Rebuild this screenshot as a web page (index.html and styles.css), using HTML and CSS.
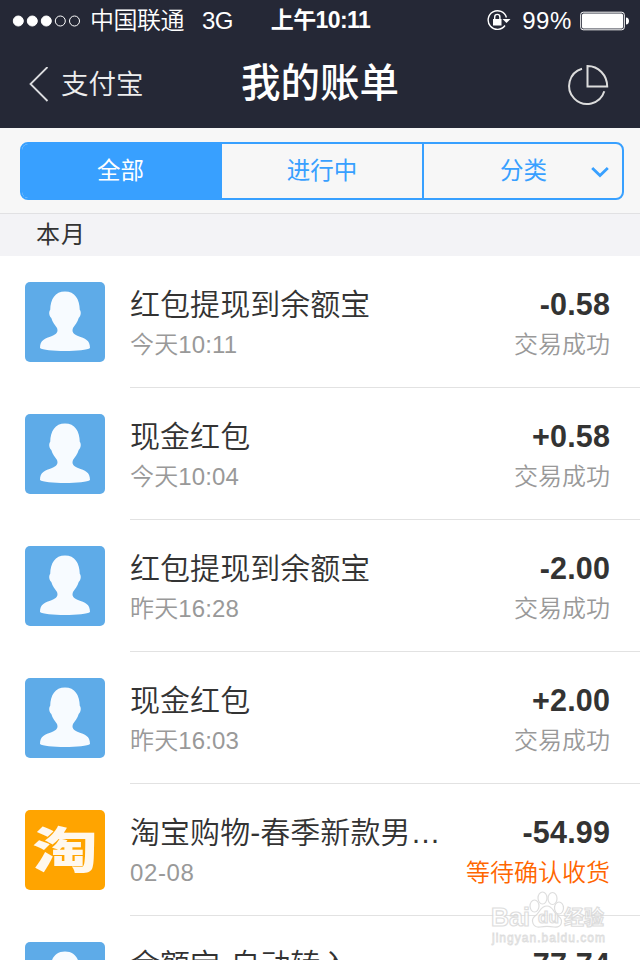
FILE: index.html
```html
<!DOCTYPE html>
<html lang="zh-CN">
<head>
    <meta charset="UTF-8">
    <meta name="viewport" content="width=device-width, initial-scale=1">
    <title>我的账单</title>
    <link rel="stylesheet" href="styles.css">
</head>
<body>
    <svg class="sprite" width="0" height="0">
        <symbol id="person" viewBox="0 0 80 80">
            <path d="M40 9.500C30 9.500 25.500 17 25.200 28C23.800 29 23.800 34 26.300 36C27.500 40.500 30 43 32 46C33.500 50 31.500 52 27 54C20 56.500 15 58 15 66C19 70 61 70 65 66C65 58 60 56.500 53 54C48.500 52 46.500 50 48 46C50 43 52.500 40.500 53.700 36C56.200 34 56.200 29 54.800 28C54.500 17 50 9.500 40 9.500Z" fill="#f7fbff"/>
        </symbol>
    </svg>

    <header class="header">
        <div class="status-bar">
            <div class="status-left">
                <svg class="signal" width="69" height="12" viewBox="0 0 69 12" fill="#fff" stroke="#fff">
                    <circle cx="6.300" cy="6" r="5"/>
                    <circle cx="20.300" cy="6" r="5"/>
                    <circle cx="34.300" cy="6" r="5"/>
                    <circle cx="48.300" cy="6" r="5" fill="none"/>
                    <circle cx="62.500" cy="6" r="5" fill="none"/>
                </svg>
                <span class="carrier">中国联通</span>
                <span class="network">3G</span>
            </div>
            <span class="clock">上午10:11</span>
            <div class="status-right">
                <svg class="lock" width="24" height="22" viewBox="0 0 24 22" fill="none" stroke="#fff" stroke-width="1.4">
                    <path d="M19.400 7.500A9.300 9.300 0 1 0 18 15.500"/>
                    <path d="M15.500 9h8l-4 4z" fill="#fff" stroke="none"/>
                    <rect x="6" y="9" width="8.500" height="6.500" fill="#fff" stroke="none"/>
                    <path d="M7.700 9.500V7a2.600 2.600 0 0 1 5.200 0V9.500"/>
                </svg>
                <span class="percent">99%</span>
                <svg class="battery" width="49" height="20" viewBox="0 0 49 20">
                    <rect x=".7" y="1.200" width="43.600" height="17.600" rx="2.500" fill="none" stroke="#fff"/>
                    <rect x="2" y="2.500" width="41" height="15" rx="1.500" fill="#fff"/>
                    <path d="M46 6.500c4 0 4 7 0 7z" fill="#fff"/>
                </svg>
            </div>
        </div>
        <nav class="nav-bar">
            <a class="back">
                <svg width="20" height="36" viewBox="0 0 20 36" fill="none" stroke="#dcdde0" stroke-width="1.800"><path d="M18.500 0L1.500 17L18.500 34"/></svg>
                <span>支付宝</span>
            </a>
            <h1>我的账单</h1>
            <a class="chart">
                <svg width="40" height="40" viewBox="0 0 40 40" fill="none" stroke="#dcdcdc" stroke-width="2">
                    <path d="M13 3.700A18 18 0 1 0 35.300 26.300"/>
                    <path d="M18.500 1V21.500H38.200A19.700 20.500 0 0 0 18.500 1Z"/>
                </svg>
            </a>
        </nav>
    </header>

    <div class="filter">
        <div class="tabs">
            <div class="tab active">全部</div>
            <div class="tab">进行中</div>
            <div class="tab tab-more">
                <span>分类</span>
                <svg width="18" height="12" viewBox="0 0 18 12" fill="none" stroke="#38a0ff" stroke-width="2.800"><path d="M1.200 2L9 9.500L16.800 2"/></svg>
            </div>
        </div>
    </div>

    <h2 class="month">本月</h2>

    <ul class="bills">
        <li class="bill">
            <svg class="avatar"><use href="#person"/></svg>
            <div class="bill-body">
                <div class="line"><span class="title">红包提现到余额宝</span><span class="amount">-0.58</span></div>
                <div class="line sub"><span class="date">今天10:11</span><span>交易成功</span></div>
            </div>
        </li>
        <li class="bill">
            <svg class="avatar"><use href="#person"/></svg>
            <div class="bill-body">
                <div class="line"><span class="title">现金红包</span><span class="amount">+0.58</span></div>
                <div class="line sub"><span class="date">今天10:04</span><span>交易成功</span></div>
            </div>
        </li>
        <li class="bill">
            <svg class="avatar"><use href="#person"/></svg>
            <div class="bill-body">
                <div class="line"><span class="title">红包提现到余额宝</span><span class="amount">-2.00</span></div>
                <div class="line sub"><span class="date">昨天16:28</span><span>交易成功</span></div>
            </div>
        </li>
        <li class="bill">
            <svg class="avatar"><use href="#person"/></svg>
            <div class="bill-body">
                <div class="line"><span class="title">现金红包</span><span class="amount">+2.00</span></div>
                <div class="line sub"><span class="date">昨天16:03</span><span>交易成功</span></div>
            </div>
        </li>
        <li class="bill">
            <div class="avatar taobao"><span>淘</span></div>
            <div class="bill-body">
                <div class="line"><span class="title">淘宝购物-春季新款男…</span><span class="amount">-54.99</span></div>
                <div class="line sub"><span class="date day">02-08</span><span class="waiting">等待确认收货</span></div>
            </div>
        </li>
        <li class="bill">
            <svg class="avatar"><use href="#person"/></svg>
            <div class="bill-body">
                <div class="line"><span class="title">余额宝-自动转入</span><span class="amount">77.74</span></div>
            </div>
        </li>
    </ul>

    <div class="watermark">
        <svg width="120" height="60" viewBox="0 0 120 60" fill="#fff" stroke="#d8d8d8" stroke-width="1.200">
            <ellipse cx="44.500" cy="16" rx="4.500" ry="6"/>
            <ellipse cx="52.500" cy="8" rx="4.500" ry="6"/>
            <ellipse cx="62.500" cy="8.500" rx="4.500" ry="6"/>
            <ellipse cx="69" cy="18" rx="4.500" ry="6"/>
            <path d="M57 16C50 16 50 23 45 26C40 30 43 38 50 37C55 36 59 36 64 37C72 38 74 30 68 26C63 22 63 16 57 16Z"/>
            <text class="wm-name" x="1" y="36" textLength="39" lengthAdjust="spacingAndGlyphs">Bai</text>
            <text class="wm-du" x="48" y="33">du</text>
            <text class="wm-cn" x="74" y="35">经验</text>
            <text class="wm-url" x="2" y="52" textLength="113">jingyan.baidu.com</text>
        </svg>
    </div>
</body>
</html>
```
FILE: styles.css
```css
* { box-sizing: border-box; }
body {
    position: relative;
    margin: 0;
    height: 960px;
    overflow: hidden;
    background: #fff;
    color: #333;
    font-family: "Liberation Sans", "Noto Sans CJK SC", sans-serif;
    font-weight: 350;
}
.sprite {
    display: none;
}
svg {
    display: block;
    flex: none;
}

/* Header */
.header {
    height: 128px;
    background: #252836;
    color: #fff;
}
.status-bar {
    display: grid;
    grid-template-columns: 240px 160px 240px;
    align-items: center;
    height: 41px;
    font-size: 24px;
    line-height: 41px;
}
.status-left {
    display: flex;
    align-items: center;
    padding-left: 12px;
}
.carrier {
    margin-left: 9px;
    letter-spacing: -0.5px;
}
.network {
    margin-left: 18px;
    letter-spacing: -0.5px;
}
.clock {
    padding-left: 1px;
    text-align: center;
    font-size: 23px;
    font-weight: 600;
    letter-spacing: -0.6px;
}
.status-right {
    display: flex;
    align-items: center;
    justify-content: flex-end;
    padding-right: 11px;
}
.percent {
    margin: 0 8px 0 11px;
    letter-spacing: 0.6px;
}
.nav-bar {
    display: grid;
    grid-template-columns: 200px 240px 200px;
    align-items: center;
    height: 87px;
}
.back {
    display: flex;
    align-items: center;
    padding-left: 29px;
    gap: 12px;
    font-size: 27.5px;
    line-height: 36px;
    color: #eee;
}
.nav-bar h1 {
    margin: 0;
    padding-bottom: 3px;
    font-size: 39.5px;
    line-height: 60px;
    font-weight: 500;
    text-align: center;
}
.chart {
    justify-self: end;
    padding-right: 31px;
}
.chart svg {
    overflow: visible;
}

/* Filter tabs */
.filter {
    height: 86px;
    padding: 14px 16px 0 20px;
    background: #f7f7f7;
    border-bottom: 1px solid #e1e1e3;
}
.tabs {
    display: grid;
    grid-template-columns: 200px 200px 1fr;
    height: 58px;
    border: 2px solid #38a0ff;
    border-radius: 8px;
    overflow: hidden;
    font-size: 23.5px;
    font-weight: 400;
    line-height: 55px;
    text-align: center;
    color: #38a0ff;
}
.tab.active {
    padding-right: 3px;
    background: #38a0ff;
    color: #fff;
}
.tab-more {
    display: flex;
    align-items: center;
    justify-content: flex-end;
    gap: 44px;
    padding-right: 13px;
    border-left: 2px solid #38a0ff;
}
.month {
    margin: 0;
    height: 42px;
    padding-left: 36px;
    background: #f3f3f6;
    font-size: 24px;
    font-weight: 400;
    line-height: 42px;
    letter-spacing: 1px;
}

/* Bill list */
.bills {
    margin: 0;
    padding: 0;
    height: 704px;
    overflow: hidden;
    list-style: none;
}
.bill {
    display: flex;
    height: 132px;
    padding-left: 25px;
    gap: 25px;
}
.avatar {
    flex: none;
    width: 80px;
    height: 80px;
    margin-top: 26px;
    border-radius: 5px;
    background: #5eabe8;
}
.taobao {
    background: #ffa400;
    color: #fff8ee;
    font-size: 62px;
    font-weight: 900;
    line-height: 84px;
    text-align: center;
}
.taobao span {
    display: block;
    transform: scale(1.05, 0.78);
}
.bill-body {
    flex: 1;
    padding: 29px 30px 0 0;
    border-bottom: 1px solid #e2e2e2;
}
.line {
    display: flex;
    justify-content: space-between;
    height: 40px;
    line-height: 40px;
    white-space: nowrap;
}
.title {
    font-size: 30px;
    letter-spacing: 0.05px;
}
.amount {
    font-size: 30.5px;
    font-weight: bold;
    line-height: 38px;
    letter-spacing: 0.2px;
    margin-right: -0.2px;
}
.sub {
    font-size: 24px;
    color: #999;
}
.date {
    letter-spacing: 0.15px;
}
.day {
    letter-spacing: 0.6px;
}
.waiting {
    color: #ff6600;
}

/* Watermark */
.watermark {
    position: absolute;
    left: 490px;
    top: 890px;
    opacity: 0.85;
}
.wm-name {
    font-size: 26px;
    font-weight: bold;
}
.wm-du {
    font-size: 17px;
    font-weight: bold;
}
.wm-cn {
    font-size: 20px;
    font-weight: bold;
}
.wm-url {
    font-size: 12px;
    stroke-width: 0.8px;
}
```
